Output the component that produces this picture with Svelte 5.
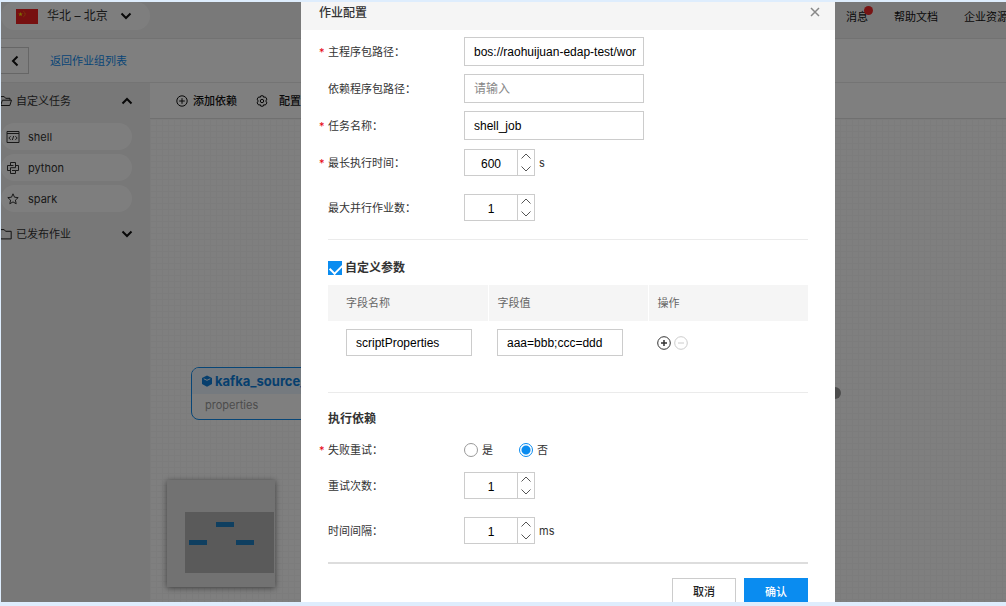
<script lang="ts">
  type Field = { id: string; label: string; required: boolean; value: string; placeholder?: string };
  type Counter = { id: string; label: string; required: boolean; value: number; unit?: string };

  let textFields: Field[] = $state([
    { id: 'main-path', label: '主程序包路径', required: true, value: 'bos://raohuijuan-edap-test/wor' },
    { id: 'dep-path', label: '依赖程序包路径', required: false, value: '', placeholder: '请输入' },
    { id: 'job-name', label: '任务名称', required: true, value: 'shell_job' }
  ]);

  let limits: Counter[] = $state([
    { id: 'max-time', label: '最长执行时间', required: true, value: 600, unit: 's' },
    { id: 'max-parallel', label: '最大并行作业数', required: false, value: 1 }
  ]);

  let retries: Counter[] = $state([
    { id: 'retry-count', label: '重试次数', required: false, value: 1 },
    { id: 'retry-interval', label: '时间间隔', required: false, value: 1, unit: 'ms' }
  ]);

  let useParams = $state(true);
  let retry = $state('no');
  let params = $state([{ name: 'scriptProperties', value: 'aaa=bbb;ccc=ddd' }]);

  const jobTypes = ['shell', 'python', 'spark'];

  function addParam() {
    params.push({ name: '', value: '' });
  }

  function removeParam(index: number) {
    params.splice(index, 1);
  }
</script>

{#snippet chevron(up: boolean)}
  <svg class="chevron" class:up viewBox="0 0 12 8" aria-hidden="true">
    <path d="M1.5 1.5 6 6l4.5-4.5" />
  </svg>
{/snippet}

{#snippet folder()}
  <svg class="folder" viewBox="0 0 12 12" aria-hidden="true">
    <path d="M.6 1.6h3.6l1.4 1.7h5.6v7.6H.6z" />
  </svg>
{/snippet}

{#snippet openFolder()}
  <svg class="folder" viewBox="0 0 12 12" aria-hidden="true">
    <path d="M.6 10.5V1.6h3.6l1.4 1.7h4.4v1.9M.6 10.500h9.200l1.700-5.300H2.400L.6 10.500" />
  </svg>
{/snippet}

{#snippet counterRow(item: Counter)}
  <div class="row counter-row">
    <label for={item.id} class:required={item.required}>{item.label}：</label>
    <div class="counter">
      <input id={item.id} type="text" inputmode="numeric" bind:value={item.value} />
      <div class="steps">
        <button type="button" aria-label="+" onclick={() => (item.value = Number(item.value) + 1)}>
          <svg viewBox="0 0 10 6"><path d="M.5 5.5 5 1l4.5 4.5" /></svg>
        </button>
        <button type="button" aria-label="-" onclick={() => (item.value = Number(item.value) - 1)}>
          <svg viewBox="0 0 10 6"><path d="M.5.5 5 5 9.5.5" /></svg>
        </button>
      </div>
    </div>
    {#if item.unit}<span class="unit">{item.unit}</span>{/if}
  </div>
{/snippet}

<div class="frame">
  <div class="page">
    <header class="topbar">
      <button type="button" class="region">
        <svg class="flag" viewBox="0 0 22 15" aria-hidden="true">
          <rect width="22" height="15" fill="#ee2020" />
          <path d="M4.5 3l.6 1.6h1.7L5.4 5.7l.5 1.6-1.4-1-1.4 1 .5-1.6-1.4-1.1h1.7z" fill="#ffde00" />
          <path d="M7.6 2.4l.8.7M8.6 4.3l.8.2M8.6 6l.8-.2M7.6 7.6l.8-.7" stroke="#ffde00" stroke-width=".7" />
        </svg>
        <span>华北 – 北京</span>
        {@render chevron(false)}
      </button>
      <nav>
        <a href="#messages" class="messages">消息</a>
        <a href="#docs">帮助文档</a>
        <a href="#company">企业资源</a>
      </nav>
    </header>

    <div class="crumb">
      <button type="button" class="back" aria-label="返回">
        <svg viewBox="0 0 8 12"><path d="M6.5 1.5 2 6l4.5 4.5" /></svg>
      </button>
      <a href="#groups">返回作业组列表</a>
    </div>

    <div class="workspace">
      <aside>
        <button type="button" class="group">
          {@render openFolder()}<span>自定义任务</span>{@render chevron(true)}
        </button>
        <ul>
          {#each jobTypes as job}
            <li>
              <svg viewBox="0 0 14 14" aria-hidden="true">
                {#if job === 'shell'}
                  <path d="M1 1.5h12v11H1zM1 3.5h12M4.6 6.2 2.8 8l1.8 1.8M9.4 6.2 11.2 8 9.4 9.8M7.7 6l-1.4 4" />
                {:else if job === 'python'}
                  <path d="M4.5 4.5V1.5h5v5.2h-5v2.8H1.5v-5h6M9.5 4.5h3v5h-3v3h-5v-3M6 9.5h3.5" />
                {:else}
                  <path d="M7 1.8l1.5 3.4 3.7.4-2.8 2.5.8 3.7L7 9.9l-3.2 1.9.8-3.7-2.8-2.5 3.7-.4z" />
                {/if}
              </svg>
              <span>{job}</span>
            </li>
          {/each}
        </ul>
        <button type="button" class="group">
          {@render folder()}<span>已发布作业</span>{@render chevron(false)}
        </button>
      </aside>

      <main>
        <div class="toolbar">
          <button type="button">
            <svg viewBox="0 0 12 12"><circle cx="6" cy="6" r="5.2" /><path d="M6 3.2v5.6M3.2 6h5.6" /></svg>
            添加依赖
          </button>
          <button type="button" class="config">
            <svg viewBox="0 0 12 12">
              <path d="M4.8.8h2.4l.5 1.500 1.600-.4 1.600 2.200L9.800 6l1.100 1.900-1.600 2.200-1.600-.4-.5 1.500H4.800l-.5-1.500-1.600.4-1.600-2.200L2.200 6 1.100 4.100l1.600-2.200 1.600.4z" />
              <circle cx="6" cy="6" r="1.700" />
            </svg>
            配置
          </button>
        </div>
        <div class="canvas">
          <div class="node">
            <div class="node-title">
              <svg viewBox="0 0 12 12" aria-hidden="true">
                <path d="M6 .4 11 3v6l-5 2.700L1 9V3z" />
                <path d="M2.800 3.800 6 5.300l3.200-1.500" class="edge" />
              </svg>
              kafka_source_1
            </div>
            <div class="node-body">properties</div>
          </div>
          <span class="port"></span>
          <div class="minimap">
            <svg viewBox="0 0 108 107" aria-hidden="true">
              <rect x="18" y="32" width="89" height="61" fill="#b4b4b4" />
              <g fill="#1e7fc0">
                <rect x="49" y="42" width="18" height="5" />
                <rect x="22" y="60" width="18" height="5" />
                <rect x="69" y="60" width="18" height="5" />
              </g>
            </svg>
          </div>
        </div>
      </main>
    </div>

    <div class="overlay">
      <form class="dialog" onsubmit={(e) => e.preventDefault()}>
        <div class="dialog-head">
          <h2>作业配置</h2>
          <button type="button" class="close" aria-label="关闭">
            <svg viewBox="0 0 10 10"><path d="M1 1l8 8M9 1 1 9" /></svg>
          </button>
        </div>

        <div class="dialog-body">
          {#each textFields as field}
            <div class="row">
              <label for={field.id} class:required={field.required}>{field.label}：</label>
              <div class="text-box">
                <input id={field.id} type="text" placeholder={field.placeholder} bind:value={field.value} />
              </div>
            </div>
          {/each}
          <section class="limits">
            {#each limits as item}
              {@render counterRow(item)}
            {/each}
          </section>

          <section class="params">
            <label class="check">
              <input type="checkbox" bind:checked={useParams} />
              自定义参数
            </label>
            <table>
              <thead>
                <tr><th>字段名称</th><th>字段值</th><th>操作</th></tr>
              </thead>
              <tbody>
                {#each params as param, i}
                  <tr>
                    <td><input type="text" aria-label="字段名称" bind:value={param.name} /></td>
                    <td><input type="text" aria-label="字段值" bind:value={param.value} /></td>
                    <td>
                      <div class="actions">
                        <button type="button" aria-label="添加" onclick={addParam}>
                          <svg viewBox="0 0 14 14"><circle cx="7" cy="7" r="6.300" /><path d="M7 4v6M4 7h6" stroke-width="1.500" /></svg>
                        </button>
                        <button type="button" aria-label="删除" disabled={params.length === 1} onclick={() => removeParam(i)}>
                          <svg viewBox="0 0 14 14"><circle cx="7" cy="7" r="6.300" /><path d="M4 7h6" /></svg>
                        </button>
                      </div>
                    </td>
                  </tr>
                {/each}
              </tbody>
            </table>
          </section>

          <section class="depend">
            <h3>执行依赖</h3>
            <div class="row retry" role="radiogroup" aria-labelledby="retry-label">
              <span id="retry-label" class="label required">失败重试：</span>
              <label class="radio"><input type="radio" value="yes" bind:group={retry} />是</label>
              <label class="radio"><input type="radio" value="no" bind:group={retry} />否</label>
            </div>
            {#each retries as item}
              {@render counterRow(item)}
            {/each}
          </section>

          <footer>
            <button type="button" class="btn">取消</button>
            <button type="submit" class="btn primary">确认</button>
          </footer>
        </div>
      </form>
    </div>
  </div>
</div>

<style>
  :global(body) {
    background: #deedfd;
  }

  .frame {
    box-sizing: border-box;
    height: 100vh;
    padding: 2px 0 4px 1px;
    font: 11px/16px Inter, 'Noto Sans CJK SC', sans-serif;
    color: #333;
  }

  .frame :global(*) {
    box-sizing: border-box;
  }

  .page {
    position: relative;
    display: flex;
    flex-direction: column;
    height: 100%;
    overflow: hidden;
    background: #fff;
  }

  button {
    padding: 0;
    border: none;
    background: none;
    font: inherit;
    color: inherit;
    cursor: pointer;
  }

  a {
    color: inherit;
    text-decoration: none;
  }

  svg {
    display: block;
    flex: none;
    fill: none;
    stroke: currentColor;
  }

  .chevron {
    width: 12px;
    height: 8px;
    stroke: #111;
    stroke-width: 2;
  }

  .chevron.up {
    transform: rotate(180deg);
  }

  .topbar {
    display: flex;
    justify-content: space-between;
    height: 37px;
    background: #f3f3f3;
    border-bottom: 1px solid #e4e4e4;
  }

  .region {
    display: flex;
    align-items: center;
    width: 149px;
    height: 28px;
    padding-left: 15px;
    border-radius: 14px;
    background: #fdfdfd;
    font-size: 12px;
  }

  .region span {
    margin: 0 12px 0 9px;
  }

  .flag {
    width: 22px;
    height: 15px;
    stroke: none;
  }

  nav {
    display: flex;
    gap: 26px;
    height: 29px;
    align-items: center;
    margin-right: -2px;
    white-space: nowrap;
    color: #111;
  }

  .messages {
    position: relative;
  }

  .messages::after {
    content: '';
    position: absolute;
    top: -3px;
    right: -5px;
    width: 9px;
    height: 9px;
    border-radius: 50%;
    background: #f02828;
  }

  .crumb {
    display: flex;
    align-items: center;
    gap: 21px;
    height: 44px;
    border-bottom: 1px solid #e8e8e8;
    color: #108cee;
  }

  .back {
    display: grid;
    place-items: center;
    width: 28px;
    height: 27px;
    border: 1px solid #ccc;
    border-left: none;
    color: #111;
  }

  .back svg {
    width: 8px;
    height: 12px;
    stroke-width: 2;
  }

  .workspace {
    display: flex;
    flex: 1;
    min-height: 0;
  }

  aside {
    width: 149px;
    background: #f0f0f0;
  }

  .group {
    display: flex;
    align-items: center;
    width: 100%;
    height: 36px;
    padding-right: 17px;
    text-align: left;
  }

  .group span {
    flex: 1;
    margin-left: 4px;
  }

  .folder {
    width: 12px;
    height: 12px;
    margin-left: -1px;
    stroke: #222;
  }

  aside ul {
    display: flex;
    flex-direction: column;
    gap: 4px;
    margin: 4px 0;
    padding: 0;
    list-style: none;
  }

  aside li {
    display: flex;
    align-items: center;
    gap: 8px;
    width: 131px;
    height: 27px;
    padding-left: 5px;
    border-radius: 14px;
    background: #fdfdfd;
  }

  aside li svg {
    width: 14px;
    height: 14px;
  }

  main {
    display: flex;
    flex: 1;
    flex-direction: column;
    min-width: 0;
  }

  .toolbar {
    display: flex;
    align-items: center;
    gap: 19px;
    height: 36px;
    padding-left: 26px;
    border-bottom: 1px solid #e0e0e0;
    font-weight: 500;
    color: #111;
  }

  .toolbar button {
    display: flex;
    align-items: center;
    gap: 5px;
  }

  .toolbar .config {
    gap: 11px;
  }

  .toolbar svg {
    width: 12px;
    height: 12px;
  }

  .canvas {
    position: relative;
    flex: 1;
    background-color: #fff;
    background-image:
      linear-gradient(#f8f8f8 1px, transparent 1px),
      linear-gradient(90deg, #f8f8f8 1px, transparent 1px);
    background-size: 6px 6px;
  }

  .node {
    position: absolute;
    left: 41px;
    top: 248px;
    width: 160px;
    overflow: hidden;
    border: 1px solid #108cee;
    border-radius: 8px;
    background: #fff;
  }

  .node-title {
    display: flex;
    align-items: center;
    gap: 2px;
    height: 26px;
    padding-left: 9px;
    background: #eaf4fe;
    font-size: 13px;
    font-weight: 700;
    color: #0c7fdc;
  }

  .node-title svg {
    width: 12px;
    height: 12px;
    fill: #0c7fdc;
    stroke: none;
  }

  .node-title .edge {
    stroke: #eaf4fe;
  }

  .node-body {
    height: 25px;
    padding-left: 13px;
    line-height: 22px;
    color: #999;
  }

  .port {
    position: absolute;
    left: 679px;
    top: 268px;
    width: 12px;
    height: 12px;
    border-radius: 50%;
    background: #999;
  }

  .minimap {
    position: absolute;
    left: 17px;
    bottom: 15px;
    width: 108px;
    background: #e4e4e4;
    box-shadow: 0 1px 6px rgba(0, 0, 0, 0.5);
  }

  .minimap svg {
    stroke: none;
  }

  .overlay {
    position: absolute;
    inset: 0;
    padding: 0 171px 0 300px;
    background: rgba(0, 0, 0, 0.5);
  }

  .dialog {
    height: 100%;
    overflow: hidden;
    background: #fff;
  }

  .dialog-head {
    display: flex;
    justify-content: space-between;
    height: 28px;
    padding: 3px 15px 0 18px;
    background: #f5f5f5;
  }

  h2,
  h3 {
    margin: 0;
    font-size: 12px;
    font-weight: 500;
    line-height: 16px;
  }

  h3 {
    font-weight: 700;
  }

  .close {
    align-self: flex-start;
    padding: 2px 0;
    color: #888;
  }

  .close svg {
    width: 10px;
    height: 10px;
    stroke-width: 1.5;
  }

  .dialog-body {
    padding: 7px 27px 0;
  }

  .row {
    display: flex;
    align-items: center;
    margin-bottom: 8px;
  }

  .row > label:first-child,
  .row > .label {
    position: relative;
    width: 136px;
  }

  .required::before {
    content: '*';
    position: absolute;
    left: -9px;
    color: #e60012;
  }

  .text-box {
    width: 180px;
  }

  input[type='text'] {
    display: block;
    width: 100%;
    height: 29px;
    padding: 0 4px 0 9px;
    border: 1px solid #ccc;
    border-radius: 0;
    background: #fff;
    font: 12px 'Liberation Sans', 'Noto Sans CJK SC', sans-serif;
    color: #000;
    outline: none;
  }

  input::placeholder {
    color: #888;
  }

  .limits {
    padding-top: 1px;
  }

  .counter-row {
    margin-bottom: 18px;
  }

  .counter {
    display: flex;
    width: 71px;
    height: 27px;
    border: 1px solid #ccc;
  }

  .counter input[type='text'] {
    flex: 1;
    min-width: 0;
    height: 25px;
    padding: 2px 0 0;
    border: none;
    text-align: center;
  }

  .steps {
    display: grid;
    width: 17px;
    border-left: 1px solid #ccc;
  }

  .steps button {
    display: grid;
    place-items: center;
  }

  .steps svg {
    width: 10px;
    height: 6px;
    stroke: #555;
  }

  .unit {
    margin-left: 4px;
  }

  .params {
    min-height: 154px;
    padding-top: 20px;
    border-top: 1px solid #ebebeb;
    border-bottom: 1px solid #ebebeb;
  }

  .check {
    display: flex;
    align-items: center;
    gap: 3px;
    height: 16px;
    font-size: 12px;
    font-weight: 700;
  }

  input[type='checkbox'] {
    appearance: none;
    width: 14px;
    height: 14px;
    margin: 0;
    background: #ccc;
  }

  input[type='checkbox']:checked {
    background: #0a8cf0;
  }

  input[type='checkbox']:checked::after {
    content: '';
    display: block;
    width: 10px;
    height: 6px;
    margin: 3px 0 0 2px;
    border: solid #fff;
    border-width: 0 0 2px 2px;
    transform: rotate(-45deg);
  }

  table {
    width: 100%;
    margin-top: 9px;
    border-collapse: collapse;
    table-layout: fixed;
  }

  th {
    height: 36px;
    padding: 0 9px;
    border-right: 1px solid #fff;
    background: #f5f5f5;
    font-weight: 400;
    text-align: left;
    color: #666;
  }

  th:last-child {
    border-right: none;
  }

  td {
    padding: 8px 9px;
  }

  th:first-child,
  td:first-child {
    padding-left: 18px;
  }

  td input[type='text'] {
    width: 126px;
    height: 27px;
  }

  .actions {
    display: flex;
    gap: 3px;
  }

  .actions svg {
    width: 14px;
    height: 14px;
  }

  .actions button:disabled {
    color: #ccc;
  }

  .depend {
    padding-top: 18px;
    border-bottom: 2px solid #ddd;
  }

  .retry {
    height: 29px;
    margin: 8px 0;
  }

  .radio {
    display: flex;
    align-items: center;
    gap: 4px;
    width: 55px;
  }

  input[type='radio'] {
    appearance: none;
    width: 14px;
    height: 14px;
    margin: 0;
    border: 1px solid #999;
    border-radius: 50%;
  }

  input[type='radio']:checked {
    border-color: #0a8cf0;
    background: radial-gradient(circle, #0a8cf0 4px, #fff 5px);
  }

  footer {
    display: flex;
    justify-content: flex-end;
    gap: 8px;
    padding-top: 14px;
  }

  .btn {
    width: 64px;
    height: 28px;
    border: 1px solid #ccc;
    font-weight: 500;
    color: #222;
  }

  .btn.primary {
    border-color: #0a8cf0;
    background: #0a8cf0;
    color: #fff;
  }
</style>
